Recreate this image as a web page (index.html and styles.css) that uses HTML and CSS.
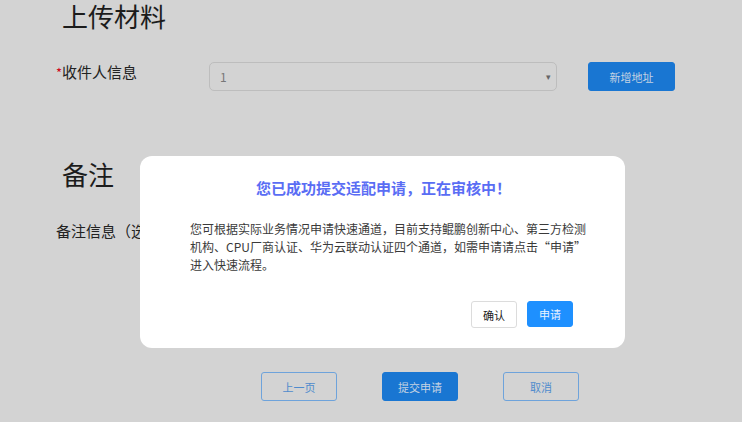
FILE: index.html
```html
<!DOCTYPE html>
<html lang="zh-CN">
<head>
<meta charset="utf-8">
<title>上传材料</title>
<link rel="stylesheet" href="styles.css">
</head>
<body>
<div class="page">
  <h1 class="section-title">上传材料</h1>
  <div class="form-row">
    <div class="label"><span class="req">*</span>收件人信息</div>
    <div class="select"><span class="select-value">1</span><span class="caret">▾</span></div>
    <button class="btn btn-fill btn-add">新增地址</button>
  </div>
  <h2 class="section-title second">备注</h2>
  <div class="label note-label">备注信息（选填）</div>
  <div class="actions">
    <button class="btn btn-outline">上一页</button>
    <button class="btn btn-fill">提交申请</button>
    <button class="btn btn-outline">取消</button>
  </div>
</div>

<div class="modal">
  <div class="modal-title">您已成功提交适配申请，正在审核中！</div>
  <p class="modal-body">您可根据实际业务情况申请快速通道，目前支持鲲鹏创新中心、第三方检测机构、CPU厂商认证、华为云联动认证四个通道，如需申请请点击“申请”进入快速流程。</p>
  <div class="modal-actions">
    <button class="mbtn mbtn-plain">确认</button>
    <button class="mbtn mbtn-primary">申请</button>
  </div>
</div>
</body>
</html>
```

FILE: styles.css
```css
* { box-sizing: border-box; }
html, body {
  margin: 0;
  padding: 0;
  width: 742px;
  height: 422px;
  overflow: hidden;
}
body {
  background: #d3d3d3;
  font-family: "Noto Sans CJK SC", "Noto Sans", sans-serif;
  color: #222;
  position: relative;
}
.page {
  padding: 1px 0 0 56px;
}
.section-title {
  margin: 0 0 0 6px;
  font-size: 26px;
  line-height: 30px;
  font-weight: 400;
  color: #1c1c1c;
}
.section-title.second {
  margin-top: 68px;
}
.form-row {
  display: flex;
  align-items: flex-start;
  margin-top: 31px;
  height: 29px;
}
.label {
  font-size: 15px;
  line-height: 20px;
  color: #222;
}
.form-row .label {
  width: 153px;
}
.req {
  color: #d0021b;
  font-size: 13px;
}
.select {
  width: 348px;
  height: 29px;
  border: 1px solid #bdbdbd;
  border-radius: 5px;
  display: flex;
  align-items: center;
  justify-content: space-between;
  padding: 0 5px 0 10px;
}
.select-value {
  font-size: 12px;
  color: #777;
}
.caret {
  font-size: 9px;
  color: #666;
}
.btn {
  font-family: "Noto Sans CJK SC", sans-serif;
  font-size: 11px;
  width: 76px;
  height: 29px;
  border-radius: 3px;
  padding: 0;
}
.btn-fill {
  background: #1976d2;
  border: 1px solid #1976d2;
  color: #c4d2e2;
}
.btn-outline {
  background: transparent;
  border: 1px solid #6ea3db;
  color: #4f8bcd;
}
.btn-add {
  width: 87px;
  margin-left: 31px;
}
.note-label {
  margin-top: 32px;
}
.actions {
  display: flex;
  gap: 45px;
  margin: 131px 0 0 205px;
}
.modal {
  position: absolute;
  left: 140px;
  top: 156px;
  width: 485px;
  height: 192px;
  background: #fff;
  border-radius: 12px;
  padding: 22px 52px 0 50px;
}
.modal-title {
  text-align: center;
  font-size: 15px;
  line-height: 20px;
  font-weight: 700;
  color: #5a6df4;
  margin-left: 4px;
}
.modal-body {
  margin: 22px 0 0 0;
  width: 397px;
  font-size: 12px;
  line-height: 18px;
  color: #3a3a3a;
}
.modal-actions {
  display: flex;
  justify-content: flex-end;
  gap: 10px;
  margin-top: 27px;
}
.mbtn {
  font-family: "Noto Sans CJK SC", sans-serif;
  font-size: 11px;
  width: 46px;
  height: 27px;
  border-radius: 3px;
  padding: 0;
}
.mbtn-plain {
  background: #fff;
  border: 1px solid #dcdcdc;
  color: #222;
}
.mbtn-primary {
  background: #1e90ff;
  border: 1px solid #1e90ff;
  color: #eaf3ff;
  height: 26px;
}
```
